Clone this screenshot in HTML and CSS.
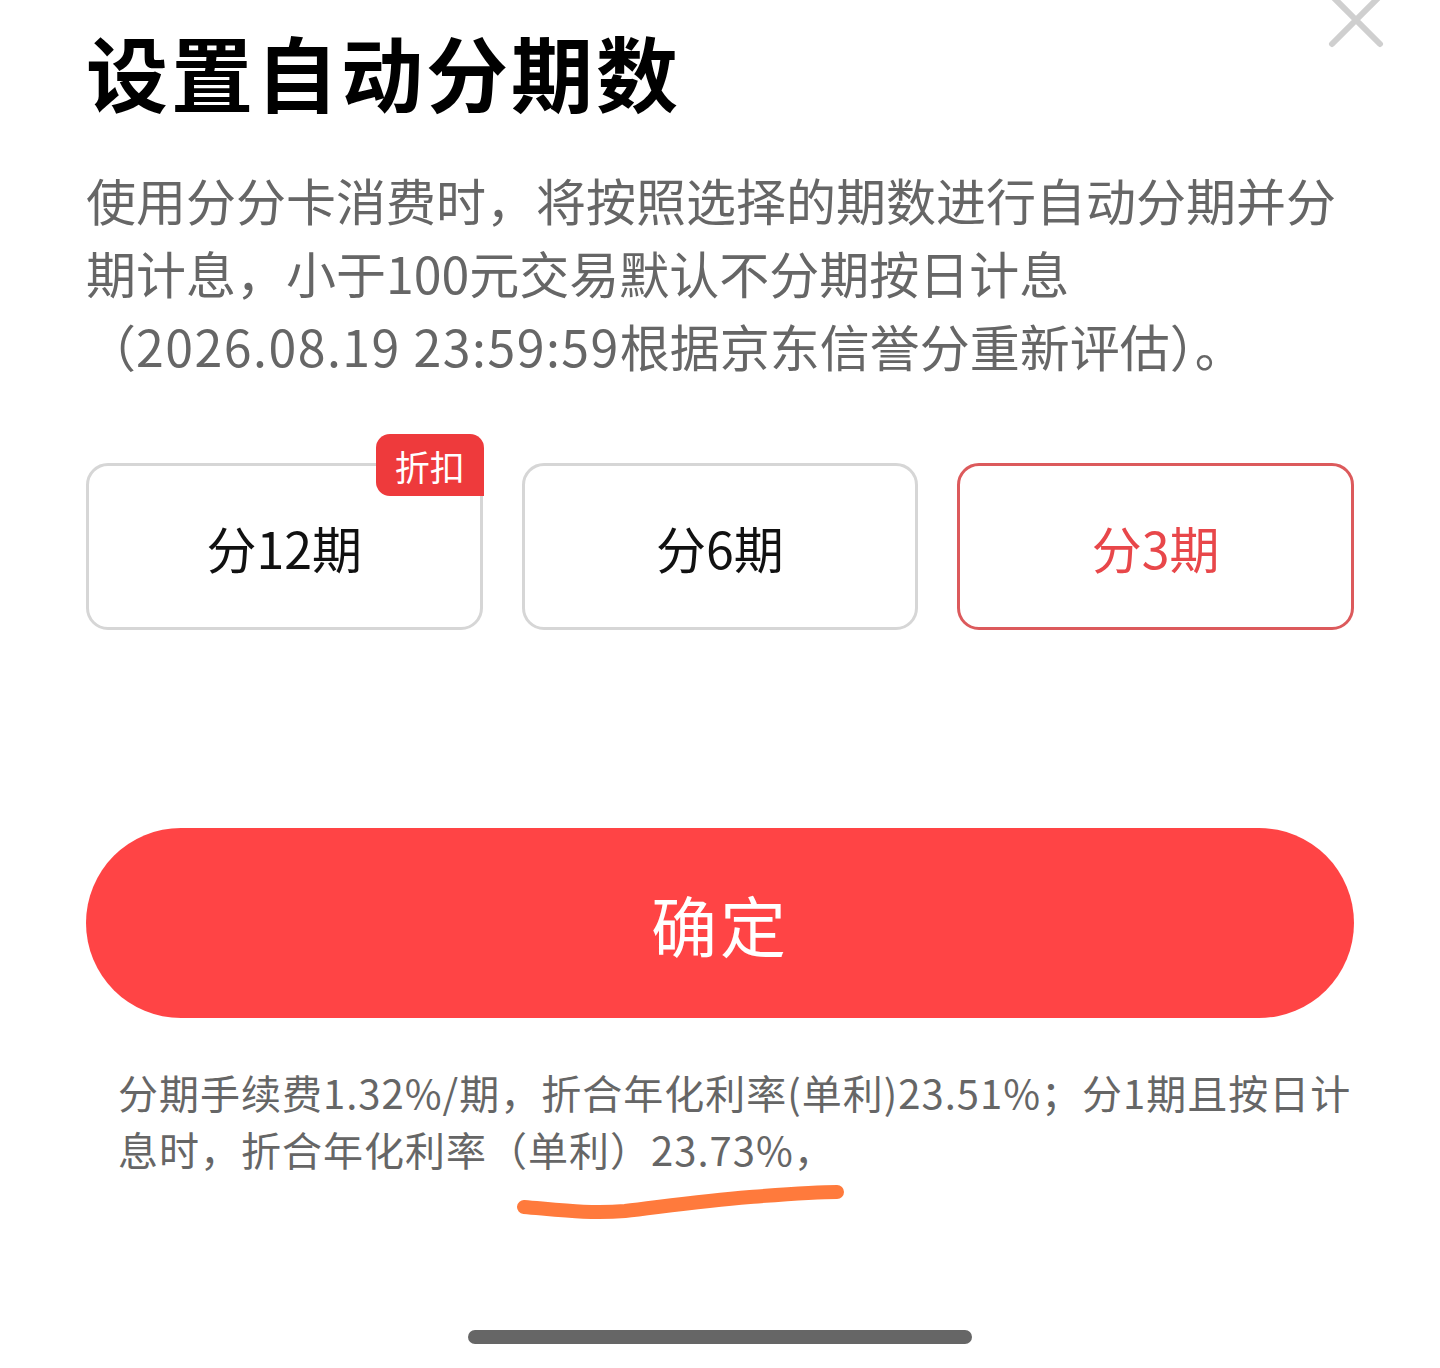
FILE: index.html
```html
<!DOCTYPE html>
<html lang="zh-CN">
<head>
<meta charset="utf-8">
<title>设置自动分期数</title>
<link rel="stylesheet" href="styles.css">
</head>
<body>
<div class="sheet">
  <svg class="close" width="64" height="64" viewBox="0 0 64 64" aria-hidden="true">
    <path d="M8 8 L56 56 M56 8 L8 56" stroke="#cfcfcf" stroke-width="6" stroke-linecap="round" fill="none"/>
  </svg>
  <h1 class="title">设置自动分期数</h1>
  <p class="desc">
    <span class="line">使用分分卡消费时，将按照选择的期数进行自动分期并分</span>
    <span class="line">期计息，小于100元交易默认不分期按日计息</span>
    <span class="line">（<span class="num">2026.08.19 23:59:59</span>根据京东信誉分重新评估）。</span>
  </p>
  <div class="options">
    <div class="option">分12期<span class="badge">折扣</span></div>
    <div class="option">分6期</div>
    <div class="option option-active">分3期</div>
  </div>
  <div class="confirm">确定</div>
  <p class="note">
    <span class="line">分期手续费1.32%/期，折合年化利率(单利)23.51%；分1期且按日计</span>
    <span class="line">息时，折合年化利率（单利）23.73%，</span>
  </p>
  <svg class="scribble" width="1440" height="1368" viewBox="0 0 1440 1368" aria-hidden="true">
    <path d="M524 1207 C560 1210 590 1214 625 1211 C660 1207 700 1201 750 1197 C790 1194 815 1192 837 1192" stroke="#ff7a3c" stroke-width="14" stroke-linecap="round" fill="none"/>
  </svg>
  <div class="home-indicator"></div>
</div>
</body>
</html>
```

FILE: styles.css
```css
html, body {
  margin: 0;
  padding: 0;
  background: #ffffff;
}

body {
  font-family: "Noto Sans CJK SC", "Noto Sans", sans-serif;
  color: #111111;
}

.sheet {
  position: relative;
  width: 1440px;
  height: 1368px;
  box-sizing: border-box;
  padding: 21px 86px 0 86px;
  overflow: hidden;
}

.close {
  position: absolute;
  left: 1324px;
  top: -12px;
}

.title {
  margin: 0;
  font-size: 82px;
  line-height: 100px;
  font-weight: 700;
  color: #000000;
  letter-spacing: 3px;
}

.desc {
  margin: 42px 0 0 0;
  font-size: 50px;
  line-height: 73px;
  color: #666666;
}

.num {
  letter-spacing: 1.5px;
}

.line {
  display: block;
  white-space: nowrap;
}

.options {
  margin-top: 81px;
  display: grid;
  grid-template-columns: repeat(3, 1fr);
  column-gap: 39px;
}

.option {
  position: relative;
  height: 167px;
  box-sizing: border-box;
  border: 3px solid #d6d6d6;
  border-radius: 22px;
  display: flex;
  align-items: center;
  justify-content: center;
  font-size: 50px;
  color: #111111;
}

.option-active {
  border-color: #dc5a5c;
  color: #e8474a;
}

.badge {
  position: absolute;
  top: -32px;
  right: -4px;
  width: 108px;
  height: 62px;
  background: #ee3a3c;
  color: #ffffff;
  font-size: 35px;
  display: flex;
  align-items: center;
  justify-content: center;
  border-radius: 14px 14px 0 14px;
}

.confirm {
  margin-top: 198px;
  height: 190px;
  border-radius: 95px;
  background: #ff4445;
  color: #ffffff;
  display: flex;
  align-items: center;
  justify-content: center;
  font-size: 66px;
  font-weight: 400;
  letter-spacing: 3px;
}

.note {
  margin: 46px 0 0 32px;
  font-size: 40px;
  line-height: 57px;
  color: #666666;
  letter-spacing: 1px;
}

.scribble {
  position: absolute;
  left: 0;
  top: 0;
  pointer-events: none;
}

.home-indicator {
  margin: 152px auto 0 auto;
  width: 504px;
  height: 14px;
  border-radius: 7px;
  background: #666666;
}
```
